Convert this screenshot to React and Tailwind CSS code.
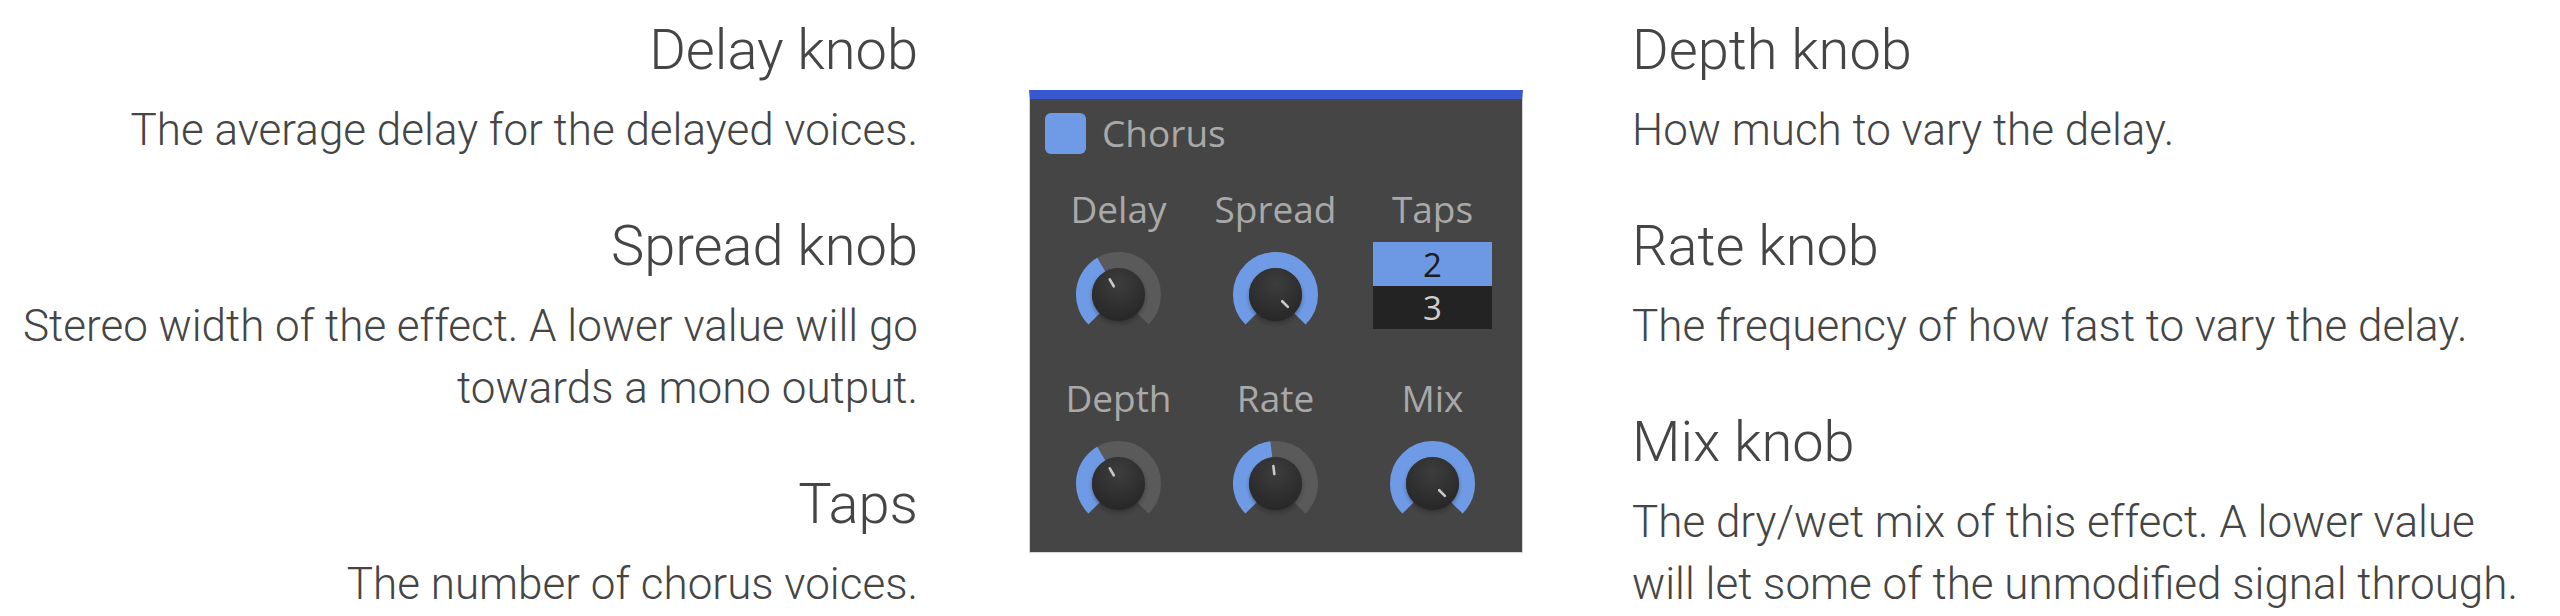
import React, { useId } from "react";

function Knob({ value }) {
  const id = useId().replace(/:/g, "");
  const cx = 42.5;
  const cy = 42.5;
  const r = 34.5;
  const pt = (a, rr) => [
    cx + rr * Math.sin((a * Math.PI) / 180),
    cy - rr * Math.cos((a * Math.PI) / 180),
  ];
  const arc = (a0, a1) => {
    const [x0, y0] = pt(a0, r);
    const [x1, y1] = pt(a1, r);
    const large = a1 - a0 > 180 ? 1 : 0;
    return `M ${x0} ${y0} A ${r} ${r} 0 ${large} 1 ${x1} ${y1}`;
  };
  const [ix0, iy0] = pt(value, 9.5);
  const [ix1, iy1] = pt(value, 17.5);
  return (
    <svg width="85" height="85" viewBox="0 0 85 85">
      <defs>
        <radialGradient id={`g${id}`} cx="50%" cy="30%" r="70%">
          <stop offset="0%" stopColor="#3d3d3d" />
          <stop offset="100%" stopColor="#272727" />
        </radialGradient>
        <filter id={`f${id}`} x="-30%" y="-30%" width="160%" height="160%">
          <feGaussianBlur stdDeviation="2" />
        </filter>
      </defs>
      <path d={arc(-135, 135)} stroke="#5a5a5a" strokeWidth="16" fill="none" />
      {value > -135 && (
        <path d={arc(-135, value)} stroke="#6f9be6" strokeWidth="16" fill="none" />
      )}
      <circle cx={cx} cy={cy + 2.5} r="26" fill="#1a1a1a" opacity="0.5" filter={`url(#f${id})`} />
      <circle cx={cx} cy={cy} r="26.5" fill={`url(#g${id})`} />
      <line
        x1={ix0}
        y1={iy0}
        x2={ix1}
        y2={iy1}
        stroke="#c9c9c9"
        strokeWidth="2.6"
        strokeLinecap="round"
      />
    </svg>
  );
}

function KnobCell({ label, value }) {
  return (
    <div className="flex w-[157px] flex-col items-center">
      <div className="h-[44px] text-[37px] leading-[44px] text-[#a9a9a9]">{label}</div>
      <div className="mt-[21px]">
        <Knob value={value} />
      </div>
    </div>
  );
}

function TapsCell() {
  return (
    <div className="flex w-[157px] flex-col items-center">
      <div className="h-[44px] text-[37px] leading-[44px] text-[#a9a9a9]">Taps</div>
      <div className="mt-[11px] flex w-[119px] flex-col">
        <div className="flex h-[44px] items-center justify-center bg-[#6d98e4] text-[33px] leading-none text-[#1c1c1c]">
          2
        </div>
        <div className="flex h-[43px] items-center justify-center bg-[#232323] text-[33px] leading-none text-[#cfcfcf]">
          3
        </div>
      </div>
    </div>
  );
}

function Section({ title, children, first }) {
  return (
    <div className={first ? "" : "mt-[52px]"}>
      <div className="text-[56px] leading-[66px]">{title}</div>
      <div className="mt-[16px] text-[44px] leading-[62px]">{children}</div>
    </div>
  );
}

export default function App() {
  return (
    <div
      className="flex h-[616px] w-[2560px] items-start bg-white text-[#454545]"
      style={{ fontFamily: "Roboto, 'Liberation Sans', sans-serif", fontWeight: 300 }}
    >
      <div className="w-[918px] shrink-0 pt-[17px] text-right">
        <Section title="Delay knob" first>
          The average delay for the delayed voices.
        </Section>
        <Section title="Spread knob">
          Stereo width of the effect. A lower value will go towards a mono output.
        </Section>
        <Section title="Taps">The number of chorus voices.</Section>
      </div>

      <div
        className="ml-[111px] mt-[90px] flex h-[463px] w-[494px] shrink-0 flex-col border-x border-b border-t-[9px] border-x-[#d4d4d4] border-b-[#d4d4d4] border-t-[#3758cf] bg-[#454545] px-[10px] pt-[12px]"
        style={{ fontFamily: "'Open Sans', 'Noto Sans', sans-serif", fontWeight: 400 }}
      >
        <div className="flex h-[44px] items-center pl-[5px]">
          <div className="h-[41px] w-[41px] rounded-[6px] bg-[#6f9be6]" />
          <div className="ml-[16px] text-[37px] leading-[44px] text-[#a9a9a9]">Chorus</div>
        </div>
        <div className="mt-[32px] flex">
          <KnobCell label="Delay" value={-30} />
          <KnobCell label="Spread" value={135} />
          <TapsCell />
        </div>
        <div className="mt-[39px] flex">
          <KnobCell label="Depth" value={-30} />
          <KnobCell label="Rate" value={-7} />
          <KnobCell label="Mix" value={135} />
        </div>
      </div>

      <div className="ml-[109px] w-[890px] shrink-0 pt-[17px] text-left">
        <Section title="Depth knob" first>
          How much to vary the delay.
        </Section>
        <Section title="Rate knob">The frequency of how fast to vary the delay.</Section>
        <Section title="Mix knob">
          The dry/wet mix of this effect. A lower value will let some of the unmodified signal
          through.
        </Section>
      </div>
    </div>
  );
}
